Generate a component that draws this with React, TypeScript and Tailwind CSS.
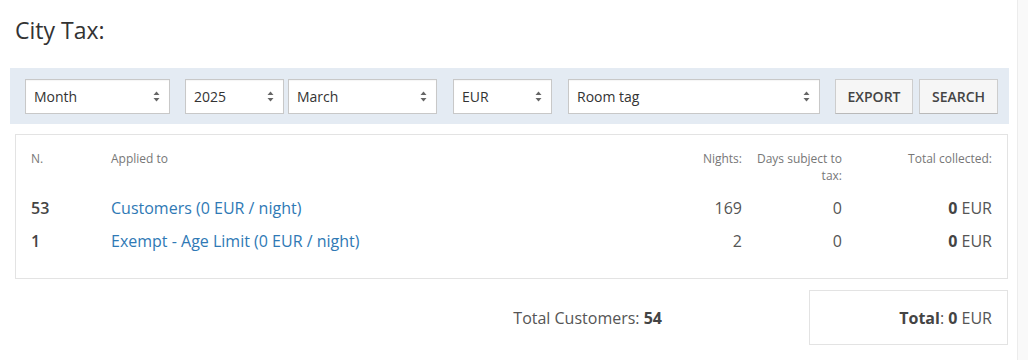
import React from "react";

function UpDown() {
  return (
    <svg width="7" height="11" viewBox="0 0 7 11" className="shrink-0">
      <path d="M3.5 0.5 L6.5 4 L0.5 4 Z" fill="#666" />
      <path d="M3.5 10.5 L6.5 7 L0.5 7 Z" fill="#666" />
    </svg>
  );
}

function Select({ label, width }: { label: string; width: string }) {
  return (
    <div
      className={`${width} flex h-[35px] items-center justify-between border border-[#c8c8c8] bg-white pl-[8px] pr-[9px] text-[14px] text-[#333] shadow-[inset_0_1px_1px_rgba(0,0,0,0.04)]`}
    >
      <span>{label}</span>
      <UpDown />
    </div>
  );
}

function Button({ label, width }: { label: string; width: string }) {
  return (
    <button
      className={`${width} h-[35px] border border-[#cdcdcd] border-b-[#b9b9b9] bg-[#f6f6f6] text-[14px] font-semibold text-[#444]`}
    >
      {label}
    </button>
  );
}

const rows = [
  { n: "53", label: "Customers (0 EUR / night)", nights: "169", days: "0", total: "0" },
  { n: "1", label: "Exempt - Age Limit (0 EUR / night)", nights: "2", days: "0", total: "0" },
];

export default function App() {
  return (
    <div className="flex h-[360px] w-[1028px] overflow-hidden bg-white font-['Open_Sans',sans-serif] text-[#333]">
      <main className="w-[1017px] shrink-0">
        <h1 className="ml-[15px] mt-[18px] text-[23px] leading-[25px] text-[#333]">City Tax:</h1>

        <div className="ml-[10px] mt-[25px] flex h-[56px] w-[999px] items-center bg-[#e4ebf3] pl-[15px]">
          <Select label="Month" width="w-[145px]" />
          <div className="ml-[15px] flex gap-[4px]">
            <Select label="2025" width="w-[99px]" />
            <Select label="March" width="w-[149px]" />
          </div>
          <div className="ml-[16px]">
            <Select label="EUR" width="w-[99px]" />
          </div>
          <div className="ml-[16px]">
            <Select label="Room tag" width="w-[252px]" />
          </div>
          <div className="ml-[15px] flex gap-[6px]">
            <Button label="EXPORT" width="w-[78px]" />
            <Button label="SEARCH" width="w-[79px]" />
          </div>
        </div>

        <div className="ml-[15px] mt-[10px] w-[993px] border border-[#e3e3e3] px-[15px] pb-[20px] pt-[15px]">
          <div className="grid grid-cols-[80px_1fr_90px_100px_150px] text-[12px] leading-[17px] text-[#777]">
            <div>N.</div>
            <div>Applied to</div>
            <div className="text-right">Nights:</div>
            <div className="pl-[12px] text-right">Days subject to tax:</div>
            <div className="text-right">Total collected:</div>
          </div>
          <div className="mt-[8px]">
            {rows.map((r) => (
              <div
                key={r.n}
                className="grid grid-cols-[80px_1fr_90px_100px_150px] py-[6px] text-[16px] leading-[21px]"
              >
                <div className="font-semibold text-[#444]">{r.n}</div>
                <div>
                  <a className="text-[#2f79b5]">{r.label}</a>
                </div>
                <div className="text-right text-[#555]">{r.nights}</div>
                <div className="text-right text-[#555]">{r.days}</div>
                <div className="text-right text-[#555]">
                  <span className="font-bold text-[#444]">{r.total}</span> EUR
                </div>
              </div>
            ))}
          </div>
        </div>

        <div className="ml-[15px] mt-[11px] flex w-[993px] items-center justify-end">
          <div className="mr-[147px] text-[16px] text-[#555]">
            Total Customers: <span className="font-bold text-[#444]">54</span>
          </div>
          <div className="flex h-[55px] w-[199px] items-center justify-end border border-[#e3e3e3] pr-[15px] text-[16px] text-[#555]">
            <span className="font-bold text-[#444]">Total</span>:&nbsp;
            <span className="font-bold text-[#444]">0</span>&nbsp;EUR
          </div>
        </div>
      </main>
      <div className="h-full flex-1 border-l border-[#ececec] bg-[#f9f9f9]" />
    </div>
  );
}
